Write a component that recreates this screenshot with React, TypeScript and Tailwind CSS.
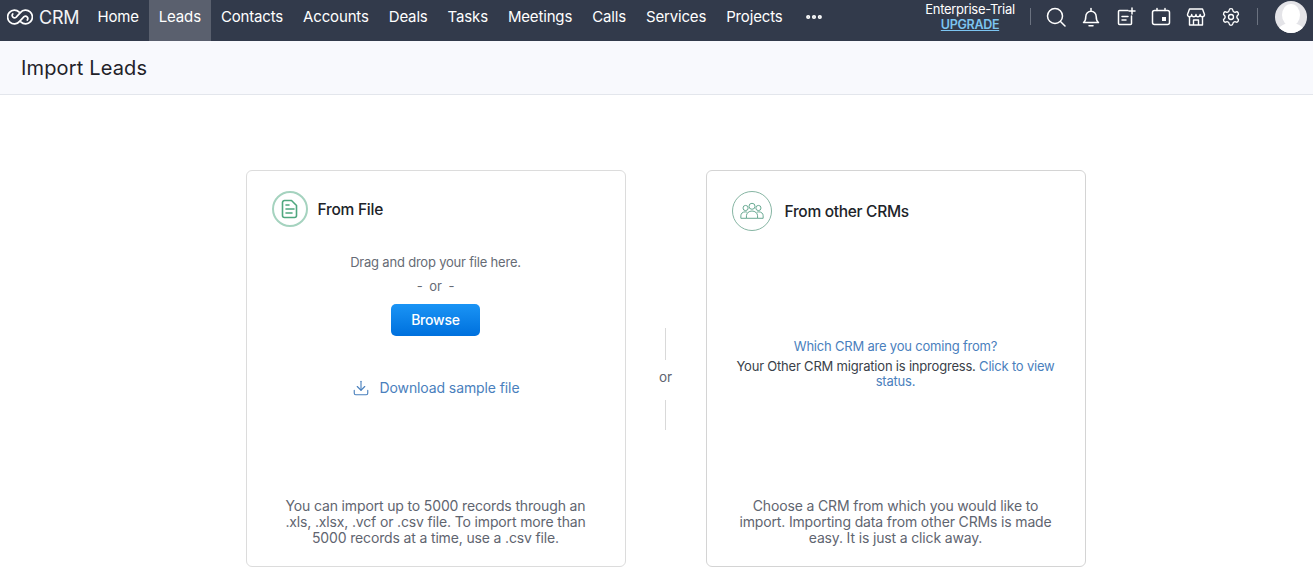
import { Settings, MoreHorizontal, Download } from 'lucide-react';

const navItems = ['Home', 'Leads', 'Contacts', 'Accounts', 'Deals', 'Tasks', 'Meetings', 'Calls', 'Services', 'Projects'];

const CrmLogo = () => (
  <svg width="26" height="18" viewBox="0 0 26 18" fill="none" stroke="#fff" strokeWidth="1.7" strokeLinecap="round">
    <path d="M12.2 4.2 A6.800 6.800 0 1 0 12.600 13.400 L17 8.600 A2.400 2.400 0 0 1 20.300 12" />
    <path d="M13.800 13.800 A6.800 6.800 0 1 0 13.400 4.600 L9 9.400 A2.400 2.400 0 0 1 5.700 6" />
  </svg>
);

const SearchIcon = () => (
  <svg width="20" height="20" viewBox="0 0 20 20" fill="none" stroke="#fff" strokeWidth="1.5" strokeLinecap="round">
    <circle cx="9" cy="9" r="7.500" />
    <path d="M14.500 14.500 19 19" />
  </svg>
);

const BellIcon = () => (
  <svg width="20" height="20" viewBox="0 0 20 20" fill="none" stroke="#fff" strokeWidth="1.500" strokeLinecap="round" strokeLinejoin="round">
    <path d="M10 1.500v2" />
    <path d="M2.500 15.500c1.500-1 2.300-2.800 2.300-6a5.200 5.200 0 0 1 10.400 0c0 3.200.8 5 2.300 6z" />
    <path d="M8 18.800h4" />
  </svg>
);

const AddNoteIcon = () => (
  <svg width="20" height="20" viewBox="0 0 20 20" fill="none" stroke="#fff" strokeWidth="1.500" strokeLinecap="round">
    <path d="M12 3.500H3.500a1 1 0 0 0-1 1v12a1 1 0 0 0 1 1h11a1 1 0 0 0 1-1V9" />
    <path d="M6 9.500h6M6 13h4" />
    <path d="M16 1v6M13 4h6" />
  </svg>
);

const CalendarIcon = () => (
  <svg width="20" height="20" viewBox="0 0 20 20" fill="none" stroke="#fff" strokeWidth="1.500">
    <rect x="1.500" y="3.500" width="17" height="14" rx="2" />
    <path d="M6 1.500v2M14 1.500v2" strokeLinecap="round" />
    <rect x="11" y="10" width="4" height="4" fill="#fff" stroke="none" />
  </svg>
);

const StoreIcon = () => (
  <svg width="20" height="20" viewBox="0 0 20 20" fill="none" stroke="#fff" strokeWidth="1.400" strokeLinejoin="round">
    <path d="M3.500 2h13l2 5.500c0 1.300-1 2.200-2.200 2.200s-2.200-.9-2.200-2.200c0 1.300-1 2.200-2.300 2.200s-1.800-.9-1.800-2.200c0 1.300-1 2.200-2.300 2.200S5.700 8.800 5.700 7.500c0 1.300-1 2.200-2.200 2.200S1.500 8.800 1.500 7.500z" />
    <path d="M3.500 10v8h13v-8" />
    <path d="M7.500 18v-5h5v5" />
  </svg>
);

const FileIcon = () => (
  <svg width="18" height="20" viewBox="0 0 18 20" fill="none" stroke="#4fa77f" strokeWidth="1.600" strokeLinecap="round" strokeLinejoin="round">
    <path d="M3.500 1.500h7l5 5v10a2 2 0 0 1-2 2h-10a2 2 0 0 1-2-2v-13a2 2 0 0 1 2-2z" />
    <path d="M5 6h3M5 10h8M5 14h6" />
  </svg>
);

const PeopleIcon = () => (
  <svg width="24" height="18" viewBox="0 0 28 20" fill="none" stroke="#5fa48b" strokeWidth="1.100">
    <circle cx="14" cy="4.500" r="3.500" />
    <circle cx="6.500" cy="6.500" r="3" />
    <circle cx="21.500" cy="6.500" r="3" />
    <path d="M7.500 18.500v-3c0-3 3-5.500 6.500-5.500s6.500 2.500 6.500 5.500v3z" />
    <path d="M7.500 18.500H1v-3c0-2.500 2-4.500 5-4.500 1 0 1.800.2 2.500.6" />
    <path d="M20.500 18.500H27v-3c0-2.500-2-4.500-5-4.500-1 0-1.800.2-2.500.6" />
  </svg>
);

const Avatar = () => (
  <svg width="32" height="32" viewBox="0 0 32 32">
    <clipPath id="avatar-clip"><circle cx="16" cy="16" r="16" /></clipPath>
    <g clipPath="url(#avatar-clip)">
      <rect width="32" height="32" fill="#e4e4e8" />
      <ellipse cx="16" cy="14" rx="9" ry="11" fill="#fff" />
      <ellipse cx="16" cy="32" rx="14" ry="10" fill="#fff" />
    </g>
  </svg>
);

const App = () => {
  return (
    <div className="h-[572px] overflow-hidden bg-white font-['Inter',sans-serif]">
      <div className="flex h-[41px] items-center bg-[#323a4b] text-white">
        <div className="flex items-center gap-[6px] pb-[7px] pl-[7px] pr-[8px]">
          <CrmLogo />
          <span className="text-[18px] tracking-[-0.2px] text-[#f2f3f5]">CRM</span>
        </div>
        <div className="flex h-full">
          {navItems.map((item) => (
            <div
              key={item}
              className={`flex h-full items-center px-[10px] pb-[6px] text-[15px] tracking-[-0.16px] ${item === 'Leads' ? 'bg-[#5a606e]' : ''}`}
            >
              {item}
            </div>
          ))}
        </div>
        <MoreHorizontal className="mb-[7px] ml-[11px] h-5 w-5" strokeWidth={3} />
        <div className="ml-auto flex items-center pb-[8px]">
          <div className="flex w-[92px] flex-col items-center text-[13px] leading-[15px] tracking-[-0.3px]">
            <span>Enterprise-Trial</span>
            <span className="text-[12.5px] font-semibold text-[#7cc4f0] underline">UPGRADE</span>
          </div>
          <div className="ml-[14px] h-[17px] w-px bg-[#6b7280]" />
          <div className="ml-[15px] flex items-center gap-[15px]">
            <SearchIcon />
            <BellIcon />
            <AddNoteIcon />
            <CalendarIcon />
            <StoreIcon />
            <Settings className="h-5 w-5" strokeWidth={1.6} />
          </div>
          <div className="ml-[16px] h-[17px] w-px bg-[#6b7280]" />
          <div className="ml-[17px] mr-[6px]">
            <Avatar />
          </div>
        </div>
      </div>

      <div className="flex h-[54px] items-center border-b border-[#e3e6ec] bg-[#f8f9fd] pl-[21px] text-[20px] tracking-[0.15px] text-[#1f2229]">
        Import Leads
      </div>

      <div className="flex justify-center pt-[75px] pl-[18px]">
        <div className="flex h-[397px] w-[380px] flex-col rounded-[6px] border border-[#dcdcdc] bg-white">
          <div className="flex items-center pl-[25px] pt-[20px]">
            <div className="flex h-[36px] w-[36px] items-center justify-center rounded-full border-2 border-[#a5d3bf]">
              <FileIcon />
            </div>
            <span className="ml-[10px] pt-[2px] text-[15.5px] font-medium tracking-[-0.25px] text-[#202329]">From File</span>
          </div>
          <div className="mt-[26px] flex flex-col items-center text-[13px] tracking-[-0.2px] text-[#666b75]">
            <span className="leading-[18px]">Drag and drop your file here.</span>
            <span className="mt-[6px] whitespace-pre leading-[18px]">-  or  -</span>
            <button className="mt-[9px] h-[32px] w-[89px] rounded-[5px] bg-gradient-to-b from-[#1a94f5] to-[#0070dd] pb-[2px] text-[14px] font-medium tracking-[-0.2px] text-white">
              Browse
            </button>
            <div className="mt-[41px] flex items-center text-[14px] tracking-[-0.1px] text-[#4a80bd]">
              <Download className="h-[18px] w-[18px]" strokeWidth={1.5} />
              <span className="ml-[10px]">Download sample file</span>
            </div>
          </div>
          <p className="mt-auto px-[30px] pb-[20px] text-center text-[14px] leading-[16px] tracking-[-0.15px] text-[#5f6570]">
            You can import up to 5000 records through an .xls, .xlsx, .vcf or .csv file. To import more than 5000 records at a time, use a .csv file.
          </p>
        </div>

        <div className="flex w-[80px] flex-col items-center justify-center pt-[21px]">
          <div className="h-[32px] w-px bg-[#d9d9d9]" />
          <span className="mb-[14px] mt-[8px] text-[13.5px] leading-[18px] text-[#5f6570]">or</span>
          <div className="h-[30px] w-px bg-[#d9d9d9]" />
        </div>

        <div className="flex h-[397px] w-[380px] flex-col rounded-[6px] border border-[#d4d4d4] bg-white">
          <div className="flex items-center pl-[25px] pt-[20px]">
            <div className="flex h-[40px] w-[40px] items-center justify-center rounded-full border border-[#86b5a3]">
              <PeopleIcon />
            </div>
            <span className="ml-[13px] pt-[2px] text-[15.5px] font-medium tracking-[-0.3px] text-[#202329]">From other CRMs</span>
          </div>
          <div className="mt-[108px] px-[26px] text-center text-[13px] leading-[15.500px] tracking-[-0.2px] text-[#3a3f49]">
            <div className="mb-[4px] text-[#4a80bd]">Which CRM are you coming from?</div>
            <div>
              Your Other CRM migration is inprogress. <span className="text-[#4a80bd]">Click to view</span>
              <br />
              <span className="text-[#4a80bd]">status.</span>
            </div>
          </div>
          <p className="mt-auto px-[30px] pb-[20px] text-center text-[14px] leading-[16px] tracking-[-0.15px] text-[#5f6570]">
            Choose a CRM from which you would like to import. Importing data from other CRMs is made easy. It is just a click away.
          </p>
        </div>
      </div>
    </div>
  );
};

export default App;
